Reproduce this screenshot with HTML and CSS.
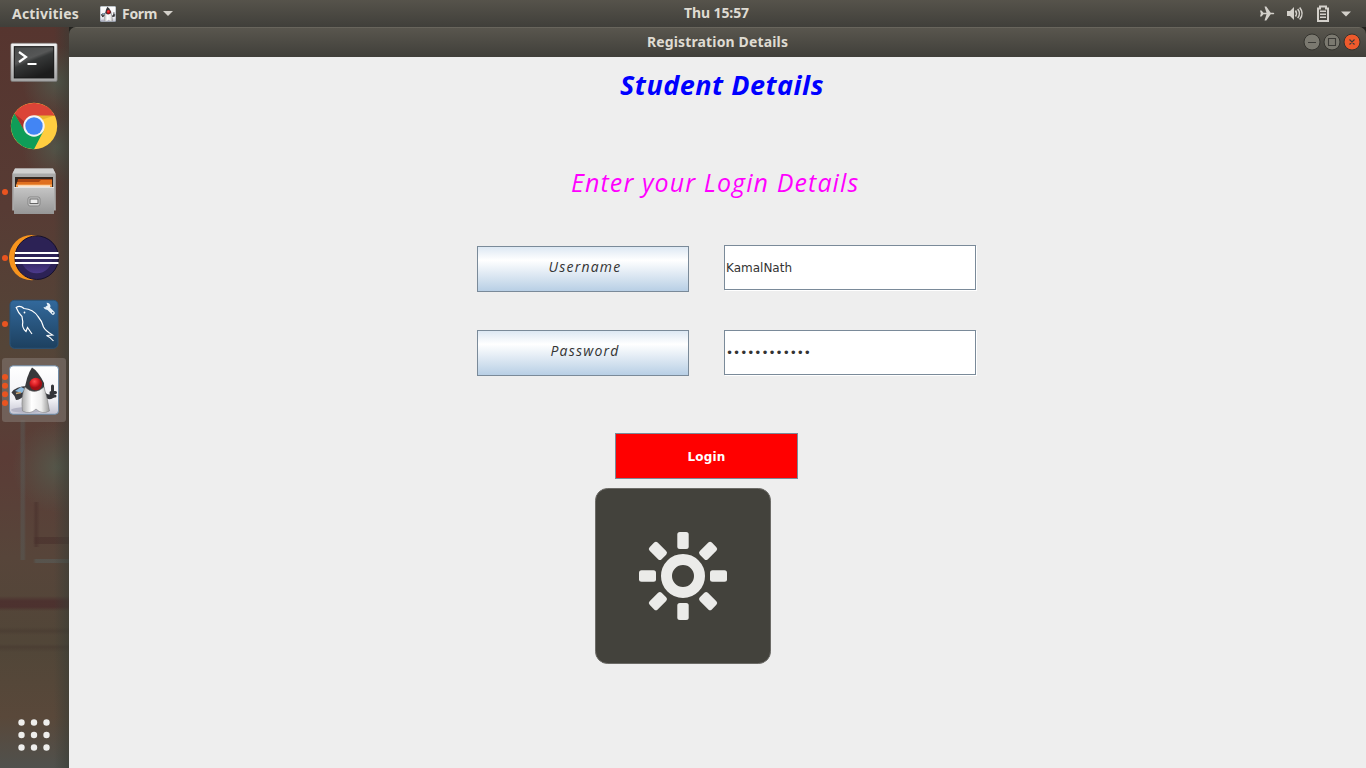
FILE: index.html
```html
<!DOCTYPE html>
<html lang="en">
<head>
<meta charset="utf-8">
<title>Registration Details</title>
<link rel="stylesheet" href="styles.css">
</head>
<body>
<header class="topbar">
  <div class="topbar-left">
    <span class="activities">Activities</span>
    <svg class="app-icon" width="16" height="16" viewBox="7 7 50 50"><use href="#duke"/></svg>
    <span class="app-name">Form</span>
    <svg class="caret" width="10" height="5" viewBox="0 0 10 5"><path d="M0 0H10L5 5Z" fill="#d3d0ca"/></svg>
  </div>
  <span class="clock">Thu 15:57</span>
  <svg class="tray" width="96" height="18" viewBox="0 0 96 18" fill="#d3d0ca">
    <path d="M1 5.500h1.500l2 2.200h3L5.500 1.500h1.800l4.400 6.200h2.800q1.500.8 0 1.600h-2.800L7.300 15.500H5.500l2-6.200h-3L2.500 11.500H1l.8-3Z"/>
    <path d="M28 6h3l4-4v13l-4-4h-3Z"/>
    <path d="M36.500 5.500q2 3 0 6M38.700 4q3.500 4.500 0 9M40.700 2.500q4.800 6 0 12" fill="none" stroke="#d3d0ca" stroke-width="1.500"/>
    <path d="M59 3.500h2v-2h6v2h2v12.500h-10Z" fill="none" stroke="#d3d0ca" stroke-width="2"/>
    <path d="M61 5.500h6v1.500h-6zM61 8.500h6v1.500h-6zM61 11.500h6v1.500h-6z"/>
    <path d="M82 6.500H92L87 11.500Z"/>
  </svg>
</header>
<div class="workspace">
  <nav class="dock">
    <svg class="slot" viewBox="0 0 64 64">
      <defs>
        <linearGradient id="frame" x2="0" y2="1"><stop stop-color="#f3f3f3"/><stop offset="1" stop-color="#a5a5a5"/></linearGradient>
        <linearGradient id="screen" x2=".5" y2="1"><stop stop-color="#484a4a"/><stop offset=".45" stop-color="#565757"/><stop offset=".55" stop-color="#363838"/><stop offset="1" stop-color="#1c1c1c"/></linearGradient>
      </defs>
      <rect x="8.800" y="15.200" width="46.400" height="38.200" rx="1.500" fill="url(#frame)" stroke="#777" stroke-width=".6"/>
      <rect x="12.300" y="18.700" width="39.400" height="31.200" fill="url(#screen)" stroke="#111"/>
      <path d="M17 24l7 5-7 5M25.500 36h9" fill="none" stroke="#fff" stroke-width="2.200"/>
    </svg>
    <svg class="slot" viewBox="0 0 64 64">
      <circle cx="32" cy="32" r="23.200" fill="#ffcd40"/>
      <path d="M12.500 19.500A23.200 23.200 0 0 1 52.800 22H32L23 37Z" fill="#db4437"/>
      <path d="M12.500 19.500A23.200 23.200 0 0 0 32 55.200L41.500 37 23 37Z" fill="#0f9d58"/>
      <path d="M12.500 19.500L22 36l1-8Z" fill="#a8322a"/>
      <path d="M32 21.500h20.500l-12 4Z" fill="#e8b52f"/>
      <circle cx="32" cy="32" r="10.700" fill="#f4f4f4"/><circle cx="32" cy="32" r="8.700" fill="#4285f4"/>
    </svg>
    <svg class="slot" viewBox="0 0 64 64">
      <defs><linearGradient id="cab" x2="0" y2="1"><stop stop-color="#c6c6c6"/><stop offset="1" stop-color="#969696"/></linearGradient></defs>
      <path d="M13 8.500H51L53.800 14V50.500H10.200V14Z" fill="#aaa"/>
      <path d="M13 8.500H51L53.500 13.500H10.500Z" fill="#d0d0d0"/>
      <rect x="13" y="17" width="38" height="11" fill="#332620"/>
      <path d="M16 19h34v8H14Z" fill="#a84412"/><path d="M15 22h22l2-2h11v7H14Z" fill="#e07020"/>
      <path d="M14 24.500h36v2H14Z" fill="#f5a85a"/><path d="M16 26.200h32" stroke="#fff" stroke-width="1.200"/>
      <rect x="12" y="27" width="40" height="27" fill="url(#cab)"/>
      <path d="M12 27.500h40" stroke="#e4e4e4"/>
      <rect x="26" y="37" width="12" height="9" rx="2" fill="#cfcfcf" stroke="#858585"/>
      <rect x="28" y="39" width="8" height="4.500" fill="#eee" stroke="#666"/>
      <circle cx="3" cy="32" r="3" fill="#e95420"/>
    </svg>
    <svg class="slot" viewBox="0 0 64 64">
      <defs><linearGradient id="ecl" x2="0" y2="1"><stop stop-color="#2c2255"/><stop offset=".5" stop-color="#2c2255"/><stop offset="1" stop-color="#4c3a8c"/></linearGradient></defs>
      <circle cx="29.600" cy="31.700" r="22.600" fill="#f7941e"/>
      <circle cx="34.700" cy="31.700" r="21.800" fill="#2c2255" stroke="#15102c"/>
      <circle cx="34.700" cy="31.700" r="15.500" fill="url(#ecl)"/>
      <path d="M13 27h43.500M12.700 32h44M13 37h43.500" stroke="#fff" stroke-width="2"/>
      <circle cx="3" cy="32" r="3" fill="#e95420"/>
    </svg>
    <svg class="slot" viewBox="0 0 64 64">
      <defs><linearGradient id="sql" x2="0" y2="1"><stop stop-color="#32699c"/><stop offset="1" stop-color="#1d405f"/></linearGradient></defs>
      <rect x="8" y="8.300" width="48" height="48" rx="4.500" fill="url(#sql)" stroke="#285379"/>
      <path d="M30 42L25.500 35.500 24 39.500Q19.500 36 20.800 30L20 24.500Q16.500 21.500 14.200 15.500Q18 13 22 16.500Q31 17 36 24.500Q40 29 41.500 35Q43.500 39 50.500 43L44.500 43.500Q49 45.500 51.500 49" fill="none" stroke="#fff" stroke-width="1.200"/>
      <circle cx="22.500" cy="20.500" r=".9" fill="#fff"/>
      <path d="M45.500 15.500l5.500 5.500" stroke="#e8f1f8" stroke-width="3.600" stroke-linecap="round"/>
      <path d="M41.500 15l3 .5 1.200-1.800-1.200-3q4 .3 4 3.800l-1.500 3q-4.500 1-5.500-2.500Z" fill="#e8f1f8"/>
      <circle cx="50.700" cy="20.700" r=".8" fill="#28557f"/>
      <circle cx="3" cy="32" r="3" fill="#e95420"/>
    </svg>
    <svg class="slot active" viewBox="0 0 64 64">
      <defs>
        <linearGradient id="tile" x2="0" y2="1"><stop stop-color="#fff"/><stop offset=".7" stop-color="#f1f1f5"/><stop offset="1" stop-color="#c4c4d2"/></linearGradient>
        <linearGradient id="belly"><stop stop-color="#aaa"/><stop offset=".35" stop-color="#fff"/><stop offset=".7" stop-color="#eee"/><stop offset="1" stop-color="#999"/></linearGradient>
        <radialGradient id="nose" cx=".4" cy=".3"><stop stop-color="#ff5050"/><stop offset=".6" stop-color="#dc1e24"/><stop offset="1" stop-color="#a01015"/></radialGradient>
        <g id="duke">
          <rect x="7.500" y="7.800" width="49" height="48.500" rx="3.500" fill="url(#tile)" stroke="#6f8ca8"/>
          <ellipse cx="26" cy="52" rx="17" ry="3" fill="#b4b4c4"/>
          <path d="M25 28Q14 28 9.500 34.500L12.500 38 14 42Q18 42 23 37Z" fill="#3a3b40"/>
          <path d="M13 33l6-4 4 2-3 4Z" fill="#8cb9dc"/><path d="M14 35.500l5-1" stroke="#caa676" stroke-width="1.500"/>
          <path d="M39 33Q45 41 50 38V35" fill="none" stroke="#34353a" stroke-width="4.500"/>
          <path d="M50.500 28v6M49 34.500h4.500M49 38h4" stroke="#34353a" stroke-width="3" stroke-linecap="round"/>
          <path d="M30 9.500Q36 13 42 25L42.500 36H22Q24 18 30 9.500Z" fill="#37383b"/>
          <path d="M23 29Q32 38 42 29Q46 42 47.500 53Q40 57 34 51Q28 57 20.500 53Q18.500 39 23 29Z" fill="url(#belly)" stroke="#777" stroke-width=".5"/>
          <circle cx="33.800" cy="26" r="6.300" fill="url(#nose)"/>
        </g>
      </defs>
      <use href="#duke"/>
      <g fill="#e95420"><circle cx="3" cy="19" r="3"/><circle cx="3" cy="27.700" r="3"/><circle cx="3" cy="36.300" r="3"/><circle cx="3" cy="45" r="3"/></g>
    </svg>
    <svg class="apps" width="32" height="32" viewBox="0 0 32 32" fill="#eeeeec">
      <circle cx="3.500" cy="3.500" r="3.200"/><circle cx="16" cy="3.500" r="3.200"/><circle cx="28.500" cy="3.500" r="3.200"/>
      <circle cx="3.500" cy="16" r="3.200"/><circle cx="16" cy="16" r="3.200"/><circle cx="28.500" cy="16" r="3.200"/>
      <circle cx="3.500" cy="28.500" r="3.200"/><circle cx="16" cy="28.500" r="3.200"/><circle cx="28.500" cy="28.500" r="3.200"/>
    </svg>
  </nav>
  <main class="window">
    <div class="titlebar">
      <span class="title">Registration Details</span>
      <svg class="controls" width="58" height="18" viewBox="0 0 58 18">
        <g stroke="#35342f"><circle cx="9" cy="9" r="8" fill="#7b7970"/><circle cx="29" cy="9" r="8" fill="#7b7970"/><circle cx="49" cy="9" r="8" fill="#ee5a2c"/></g>
        <path d="M5 9.500h8M25.500 5.500h7v7h-7zM46.500 6.500l5 5M51.500 6.500l-5 5" fill="none" stroke="#3c3b37" stroke-width="1.100"/>
      </svg>
    </div>
    <div class="content">
      <h1 class="heading">Student Details</h1>
      <h2 class="subheading">Enter your Login Details</h2>
      <div class="form">
        <div class="row"><button class="label">Username</button><div class="field">KamalNath</div></div>
        <div class="row"><button class="label password-label">Password</button><div class="field">••••••••••••</div></div>
      </div>
      <button class="login">Login</button>
      <svg class="osd" width="176" height="176" viewBox="0 0 176 176">
        <defs><rect id="ray" x="82.300" y="44" width="11.400" height="17" rx="2.500"/></defs>
        <rect x=".5" y=".5" width="175" height="175" rx="12" fill="#43423c" stroke="#6c6b67"/>
        <g fill="#ebebe9">
          <use href="#ray"/><use href="#ray" transform="rotate(45 88 88)"/><use href="#ray" transform="rotate(90 88 88)"/><use href="#ray" transform="rotate(135 88 88)"/>
          <use href="#ray" transform="rotate(180 88 88)"/><use href="#ray" transform="rotate(225 88 88)"/><use href="#ray" transform="rotate(270 88 88)"/><use href="#ray" transform="rotate(315 88 88)"/>
        </g>
        <circle cx="88" cy="88" r="16.500" fill="none" stroke="#ebebe9" stroke-width="11"/>
      </svg>
    </div>
  </main>
</div>
</body>
</html>
```
FILE: styles.css
```css
* { box-sizing: border-box; }
body {
  margin: 0;
  width: 1366px;
  height: 768px;
  overflow: hidden;
  display: flex;
  flex-direction: column;
  background: #23221e;
  font-family: "Noto Sans", sans-serif;
}
svg { display: block; flex: none; }
.topbar {
  height: 27px;
  display: grid;
  grid-template-columns: 672px auto 1fr;
  align-items: center;
  padding: 0 12px;
  background: linear-gradient(#56534b, #403f3a);
  color: #dfdbd2;
  font-size: 14px;
  font-weight: 700;
  line-height: 20px;
}
.topbar-left { display: flex; align-items: center; }
.activities { width: 88px; white-space: nowrap; letter-spacing: .2px; }
.app-name { width: 36px; margin: 0 5px 0 6px; letter-spacing: -.3px; }
.clock { padding-bottom: 2px; letter-spacing: -.1px; }
.tray { justify-self: end; margin-right: -1px; }
.workspace { flex: 1; display: flex; min-height: 0; }
.dock {
  width: 69px;
  padding: 1px 3px 17px 2px;
  display: flex;
  flex-direction: column;
  gap: 2px;
  background:
    linear-gradient(90deg, transparent 78%, #373c3590 100%),
    linear-gradient(90deg, transparent 20px, #58605e66 21px 24px, transparent 26px) 0 393px / 69px 140px no-repeat,
    linear-gradient(90deg, transparent 33px, #48302c99 36px, transparent 40px) 0 475px / 69px 45px no-repeat,
    linear-gradient(90deg, transparent 33px, #48302c99 36px) 0 510px / 69px 7px no-repeat,
    linear-gradient(90deg, transparent 33px, #58605e88 36px) 0 532px / 69px 4px no-repeat,
    linear-gradient(transparent 569px, #49282aaa 574px 580px, transparent 584px 600px, #46382f88 604px, transparent 608px 617px, #46382f88 620px, transparent 625px),
    radial-gradient(circle at 58px 55px, #525549 0, transparent 36px),
    radial-gradient(circle at 58px 120px, #525549 0, transparent 36px),
    radial-gradient(circle at 58px 440px, #55574a 0, transparent 46px),
    linear-gradient(#56352f, #573b34 180px, #544538 320px, #5b3c36 430px, #57453a 530px, #514638 620px, #59483a 690px, #50514d 741px);
}
.slot { width: 64px; height: 64px; border-radius: 3px; }
.active { background: #82776f99; }
.apps { margin: auto 0 0 16px; }
.window { flex: 1; display: flex; flex-direction: column; border-radius: 7px 7px 0 0; overflow: hidden; }
.titlebar {
  height: 30px;
  display: grid;
  grid-template-columns: 1fr auto 1fr;
  align-items: center;
  padding: 0 5px;
  border-top: 1px solid #68655c;
  background: linear-gradient(#59564e, #403f3a);
  color: #dfdbd2;
  font-size: 14px;
  font-weight: 700;
  letter-spacing: .15px;
}
.title { grid-column: 2; padding-bottom: 2px; }
.controls { justify-self: end; margin-top: -1px; }
.content { flex: 1; background: #eee; }
.heading, .subheading { margin: 0; font-family: "Open Sans", sans-serif; font-style: italic; white-space: nowrap; }
.heading { padding: 11px 0 0 551px; font-size: 27px; font-weight: 700; line-height: 34px; letter-spacing: .5px; color: #00f; }
.subheading { padding: 63px 0 0 502px; font-size: 25px; font-weight: 500; line-height: 34px; letter-spacing: 1.1px; color: #f0f; }
.form { padding: 46px 0 0 408px; display: flex; flex-direction: column; gap: 38px; }
.row { display: flex; gap: 35px; height: 47px; }
.label, .login { padding: 0; border: 1px solid #7a8a99; border-radius: 0; text-align: center; }
.label {
  width: 212px;
  height: 46px;
  margin-top: 1px;
  padding: 0 0 5px 4px;
  background: linear-gradient(#dde8f3, #fff 30%, #b8cfe5);
  color: #333;
  font: italic 500 14px "Open Sans", sans-serif;
  letter-spacing: 1.2px;
}
.password-label { margin-top: 0; }
.field {
  width: 252px;
  height: 45px;
  padding-left: 1px;
  border: 1px solid #7a8a99;
  box-shadow: 1px 1px #fff;
  background: #fff;
  color: #333;
  font-family: "DejaVu Sans", sans-serif;
  font-size: 12px;
  line-height: 45px;
}
.login {
  display: block;
  width: 183px;
  height: 46px;
  margin: 56px 0 0 546px;
  padding-top: 1px;
  background: red;
  color: #fff;
  font: bold 12px "DejaVu Sans", sans-serif;
  letter-spacing: .2px;
}
.osd { margin: 9px 0 0 526px; }
```
